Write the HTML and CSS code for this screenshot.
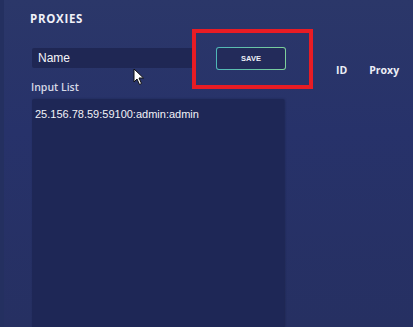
FILE: index.html
```html
<!DOCTYPE html>
<html lang="en">
<head>
    <meta charset="UTF-8">
    <title>Proxies</title>
    <link rel="stylesheet" href="styles.css">
</head>
<body>
    <div class="sidebar-edge"></div>
    <div class="page">
        <h1 class="title">PROXIES</h1>
        <div class="row">
            <div class="left">
                <div class="name-input">Name</div>
                <div class="label">Input List</div>
                <div class="list">25.156.78.59:59100:admin:admin</div>
            </div>
            <div class="save-wrap">
                <button class="save">SAVE</button>
            </div>
            <div class="cols">
                <span>ID</span>
                <span>Proxy</span>
            </div>
        </div>
    </div>

    <!-- highlight box + mouse pointer -->
    <div class="highlight"></div>
    <svg class="pointer" width="12" height="18" viewBox="0 0 12 18">
        <path d="M1 1 L1 14 L4 11 L6.5 16.5 L8.5 15.5 L6 10 L10.5 10 Z" fill="#fff" stroke="#111" stroke-width="1"/>
    </svg>
</body>
</html>
```

FILE: styles.css
```css
body {
    margin: 0;
    height: 327px;
    overflow: hidden;
    background: linear-gradient(180deg, #2b3769 0%, #27326a 40%, #263062 100%);
    font-family: 'Liberation Sans', Arial, sans-serif;
    color: #fff;
    display: flex;
}
.sidebar-edge {
    width: 4px;
    background: #243060;
}
.page {
    padding: 12px 0 0 26px;
    flex: 1;
}
.title {
    margin: 0;
    font-family: 'Open Sans', sans-serif;
    font-weight: 700;
    font-size: 11.5px;
    letter-spacing: 0.7px;
    color: #f0f1f8;
    line-height: 14px;
}
.row {
    display: flex;
    margin-top: 22px;
}
.left {
    width: 252px;
    margin-left: 2px;
}
.name-input {
    width: 158px;
    height: 20px;
    line-height: 21px;
    background: #1f2754;
    border-radius: 2px;
    padding-left: 6px;
    font-size: 12px;
    color: #f4f4f8;
}
.label {
    margin-top: 12px;
    font-family: 'Open Sans', sans-serif;
    font-size: 10.5px;
    font-weight: 600;
    color: #d6d9e6;
    line-height: 14px;
    margin-left: -1px;
}
.list {
    margin-top: 5px;
    height: 212px;
    background: #1e2756;
    border-radius: 2px;
    padding: 9px 3px 8px;
    font-size: 11px;
    color: #f2f2f6;
    box-shadow: 1px 0 2px rgba(20, 25, 60, 0.5);
}
.save-wrap {
    margin-left: -68px;
    margin-top: -1px;
}
.save {
    width: 70px;
    height: 23px;
    border: 1px solid transparent;
    border-radius: 3px;
    background: linear-gradient(#232b5a, #232b5a) padding-box,
                linear-gradient(90deg, #4fb7b8, #7ed19a) border-box;
    color: #eef0f6;
    font-family: 'Liberation Sans', Arial, sans-serif;
    font-weight: 700;
    font-size: 7.5px;
    cursor: pointer;
}
.cols {
    display: flex;
    gap: 22px;
    margin-left: 50px;
    margin-top: 15px;
    font-family: 'Open Sans', sans-serif;
    font-weight: 700;
    font-size: 10.5px;
    color: #eceef6;
    line-height: 14px;
}
.highlight {
    position: absolute;
    left: 192px;
    top: 29px;
    width: 113px;
    height: 52px;
    border: 4px solid #e81c24;
}
.pointer {
    position: absolute;
    left: 133px;
    top: 68px;
}
```
